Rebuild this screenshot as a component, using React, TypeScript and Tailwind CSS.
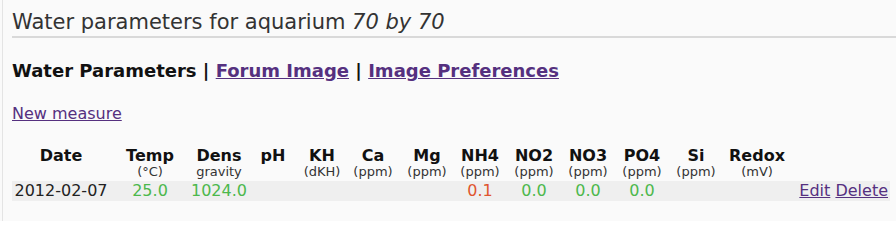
type Column = {
    label: string;
    unit?: string;
    width: string;
};

const columns: Column[] = [
    { label: "Date", width: "w-[98px]" },
    { label: "Temp", unit: "(°C)", width: "w-[80px]" },
    { label: "Dens", unit: "gravity", width: "w-[58px]" },
    { label: "pH", width: "w-[50px]" },
    { label: "KH", unit: "(dKH)", width: "w-[48px]" },
    { label: "Ca", unit: "(ppm)", width: "w-[54px]" },
    { label: "Mg", unit: "(ppm)", width: "w-[54px]" },
    { label: "NH4", unit: "(ppm)", width: "w-[52px]" },
    { label: "NO2", unit: "(ppm)", width: "w-[56px]" },
    { label: "NO3", unit: "(ppm)", width: "w-[52px]" },
    { label: "PO4", unit: "(ppm)", width: "w-[56px]" },
    { label: "Si", unit: "(ppm)", width: "w-[52px]" },
    { label: "Redox", unit: "(mV)", width: "w-[70px]" },
];

type Value = { text: string; tone?: "good" | "bad" };

const measures: { date: string; values: Value[] }[] = [
    {
        date: "2012-02-07",
        values: [
            { text: "25.0", tone: "good" },
            { text: "1024.0", tone: "good" },
            { text: "" },
            { text: "" },
            { text: "" },
            { text: "" },
            { text: "0.1", tone: "bad" },
            { text: "0.0", tone: "good" },
            { text: "0.0", tone: "good" },
            { text: "0.0", tone: "good" },
            { text: "" },
            { text: "" },
        ],
    },
];

function toneClass(tone?: Value["tone"]) {
    if (tone === "good") return "text-[#4cb84c]";
    if (tone === "bad") return "text-[#e0552f]";
    return "text-[#222]";
}

export default function App() {
    return (
        <div className="h-[221px] overflow-hidden bg-[#fafafa] pl-[2px] font-['DejaVu_Sans',Verdana,sans-serif]">
            <div className="h-full border-l border-[#e4e4e4] pl-[9px]">
                <h1 className="pt-[9px] text-[21px] leading-[26px] font-normal text-[#333] pb-[1px] border-b-2 border-[#d9d9d9]">
                    Water parameters for aquarium <i>70 by 70</i>
                </h1>

                <p className="mt-[22px] text-[18px] leading-[22px] font-bold text-[#111]">
                    Water Parameters |{" "}
                    <a href="#" className="text-[#55307f] underline">
                        Forum Image
                    </a>{" "}
                    |{" "}
                    <a href="#" className="text-[#55307f] underline">
                        Image Preferences
                    </a>
                </p>

                <p className="mt-[23px] text-[16px] leading-[18px]">
                    <a href="#" className="text-[#55307f] underline">
                        New measure
                    </a>
                </p>

                <table className="mt-[24px] table-fixed border-collapse text-[16px] text-[#222]">
                    <thead>
                        <tr>
                            {columns.map((col) => (
                                <th key={col.label} className={`${col.width} h-[34px] p-0 text-center align-top`}>
                                    <div className="text-[16px] leading-[18px] font-bold text-[#111]">{col.label}</div>
                                    {col.unit && (
                                        <div className="text-[13px] leading-[14px] font-normal text-[#333]">{col.unit}</div>
                                    )}
                                </th>
                            ))}
                            <th className="w-[98px] p-0" />
                        </tr>
                    </thead>
                    <tbody>
                        {measures.map((m) => (
                            <tr key={m.date} className="bg-[#efefef]">
                                <td className="h-[20px] p-0 text-center leading-[20px]">{m.date}</td>
                                {m.values.map((v, i) => (
                                    <td key={i} className={`p-0 text-center leading-[20px] ${toneClass(v.tone)}`}>
                                        {v.text}
                                    </td>
                                ))}
                                <td className="p-0 pr-[2px] text-right leading-[20px]">
                                    <a href="#" className="text-[#55307f] underline">
                                        Edit
                                    </a>{" "}
                                    <a href="#" className="text-[#55307f] underline">
                                        Delete
                                    </a>
                                </td>
                            </tr>
                        ))}
                    </tbody>
                </table>
            </div>
        </div>
    );
}
